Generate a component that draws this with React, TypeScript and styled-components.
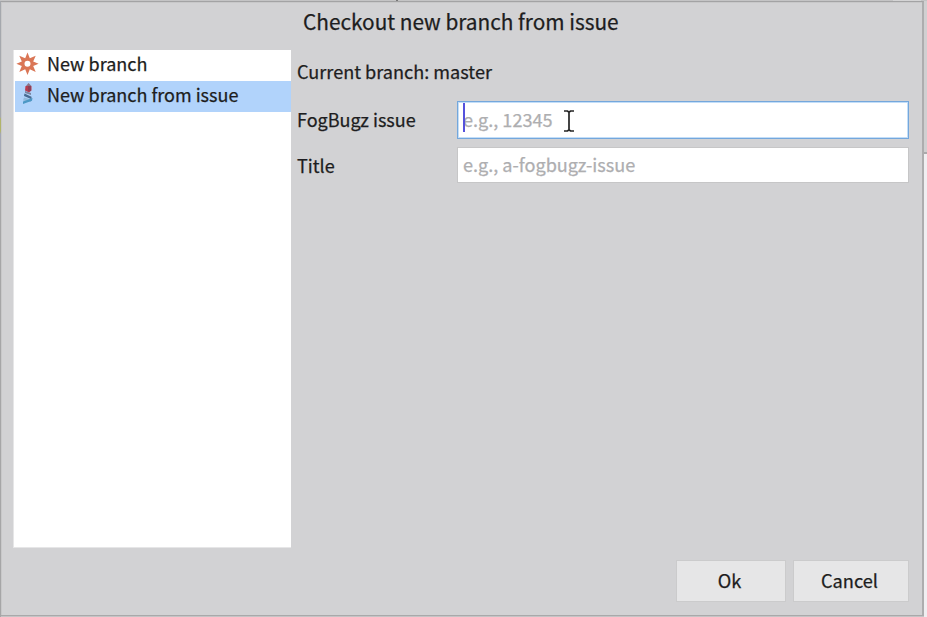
import React from "react";
import styled, { createGlobalStyle } from "styled-components";

const Global = createGlobalStyle`
  * { box-sizing: border-box; }
  html, body { margin: 0; }
  body { overflow: hidden; font-family: "Noto Sans CJK SC", "Noto Sans", sans-serif; color: #1d1d20; -webkit-text-stroke: 0.25px; }
`;

const Desktop = styled.div`
  width: 927px;
  height: 617px;
  display: grid;
  grid-template-columns: 1px 923px 3px;
  grid-template-rows: 1px 616px;
  background: #c4c4c5;
`;

const TopEdge = styled.div`
  grid-column: 1 / 4;
  display: flex;
  background: #c4c4c5;
`;

const EdgeMark = styled.i<{ $start: number; $width: number; $color: string }>`
  margin-left: ${(p) => p.$start}px;
  width: ${(p) => p.$width}px;
  background: ${(p) => p.$color};
`;

const LeftEdge = styled.div`
  background: linear-gradient(#a5a8ad 116px, #b1b46a 118px 130px, #a3a7b5 133px 150px, #a6a6a7 160px);
`;

const Dialog = styled.main`
  display: flex;
  flex-direction: column;
  background: #d2d2d4;
  border: 1px solid #a3a3a4;
  border-left: 0;
  border-right: 2px solid #adadae;
  border-bottom-color: #a9a9aa;
  height: 615px;
  box-shadow: inset 1px 1px #c8c8c9;
`;

const RightEdge = styled.div`
  background: linear-gradient(#d0d0d1 151px, #aaaaab 151px 153px, #f0eff1 153px);
`;

const Title = styled.h1`
  margin: 0;
  height: 48px;
  padding-left: 302px;
  font-size: 20.8px;
  font-weight: 400;
  line-height: 39px;
  white-space: nowrap;
`;

const Body = styled.div`
  display: flex;
  gap: 6px;
  height: 498px;
  padding-left: 12px;
`;

const List = styled.ul`
  width: 278px;
  margin: 0;
  padding: 0 0 0 1px;
  background: #fff;
  border: 1px solid #e6e6e7;
  border-width: 0 0 1px 1px;
  list-style: none;
`;

const ListItem = styled.li<{ $selected?: boolean }>`
  height: 31px;
  display: flex;
  align-items: flex-start;
  gap: 8px;
  padding-left: 1px;
  font-size: 18px;
  line-height: 27px;
  white-space: nowrap;
  background: ${(p) => (p.$selected ? "#b1d3fb" : "#fff")};
`;

const Form = styled.form`
  width: 612px;
  display: flex;
  flex-direction: column;
`;

const Branch = styled.p`
  margin: 0;
  height: 51px;
  font-size: 18.1px;
  line-height: 43px;
`;

const Field = styled.label`
  display: grid;
  grid-template-columns: 160px 452px;
  align-items: start;
  height: 38px;
  margin-bottom: 8px;
  font-size: 18.1px;
  line-height: 36px;
`;

const FieldName = styled.span`
  font-size: 18px;
`;

const InputFrame = styled.span<{ $focused?: boolean }>`
  position: relative;
  height: ${(p) => (p.$focused ? 38 : 36)}px;
  display: flex;
  background: #fff;
  border: 1px solid ${(p) => (p.$focused ? "#74a7dc" : "#c6c6c7")};
  box-shadow: ${(p) => (p.$focused ? "inset 0 0 0 1px #c3def8" : "none")};
`;

const Input = styled.input`
  width: 100%;
  min-width: 0;
  padding: 0 0 2px 5px;
  border: 0;
  outline: 0;
  background: transparent;
  font: inherit;
  &::placeholder { color: #aeaeb0; opacity: 1; }
`;

const Caret = styled.i`
  position: absolute;
  left: 5px;
  top: 1px;
  width: 2px;
  height: 29px;
  background: #5552dc;
`;

const Pointer = styled.svg`
  position: absolute;
  left: 105px;
  top: 7px;
`;

const Footer = styled.footer`
  display: flex;
  justify-content: flex-end;
  gap: 7px;
  padding: 12px 13px 0 0;
`;

const Button = styled.button<{ $width: number }>`
  width: ${(p) => p.$width}px;
  height: 42px;
  padding: 0 3px 3px 0;
  border: 1px solid #cbcbcc;
  border-radius: 0;
  background: #e6e6e7;
  color: inherit;
  font: 18.2px "Noto Sans CJK SC", sans-serif;
`;

const SparkIcon = () => (
  <svg width="23" height="27" viewBox="0 0 23 27">
    <path
      fillRule="evenodd"
      fill="#da7656"
      d="M11.5 2.5 13.8 8.3 19.7 5.7 17.2 11.6 22.6 13.8 17.2 16 19.7 22 13.8 19.3 11.5 25 9.2 19.3 3.3 22 5.8 16 .4 13.8 5.8 11.6 3.3 5.7 9.2 8.3ZM11.5 10.8A3 3 0 1 0 11.5 16.8A3 3 0 1 0 11.5 10.8Z"
    />
  </svg>
);

const LighthouseIcon = () => (
  <svg width="23" height="27" viewBox="0 0 23 27">
    <path d="M10 5 12.5 2 15.5 5Z" fill="#8b7487" />
    <path d="M9.5 5H15.5V9.5L13 11.5 9 9.5Z" fill="#b63c50" />
    <path d="M12 5H15V10H12Z" fill="#8d4058" />
    <path d="M9 10 15 12V14L9 12Z" fill="#7985a1" />
    <path d="M8.5 12.5 15.5 15.7V18.2L8 15Z" fill="#476b92" />
    <path d="M8 16.5 15.5 18.5 15 21 7 19.5Z" fill="#90b9dc" />
    <path d="M16.5 17 7 20.5V23L16 19.8Z" fill="#4c98c5" />
  </svg>
);

export default function App() {
  return (
    <>
      <Global />
      <Desktop>
        <TopEdge>
          <EdgeMark $start={396} $width={2} $color="#777" />
          <EdgeMark $start={495} $width={28} $color="#d4d4d5" />
        </TopEdge>
        <LeftEdge />
        <Dialog>
          <Title>Checkout new branch from issue</Title>
          <Body>
            <List>
              <ListItem><SparkIcon />New branch</ListItem>
              <ListItem $selected><LighthouseIcon />New branch from issue</ListItem>
            </List>
            <Form onSubmit={(e) => e.preventDefault()}>
              <Branch>Current branch: master</Branch>
              <Field>
                <FieldName>FogBugz issue</FieldName>
                <InputFrame $focused>
                  <Input placeholder="e.g., 12345" />
                  <Caret />
                  <Pointer width="12" height="24" viewBox="0 0 12 24" fill="none" stroke="#242424" strokeWidth="1.7">
                    <path d="M1 2H4.5L6 3.2 7.5 2H11M6 3V21M1 22H4.5L6 20.8 7.5 22H11" />
                  </Pointer>
                </InputFrame>
              </Field>
              <Field>
                <FieldName>Title</FieldName>
                <InputFrame><Input placeholder="e.g., a-fogbugz-issue" /></InputFrame>
              </Field>
            </Form>
          </Body>
          <Footer>
            <Button $width={110}>Ok</Button>
            <Button $width={116}>Cancel</Button>
          </Footer>
        </Dialog>
        <RightEdge />
      </Desktop>
    </>
  );
}
